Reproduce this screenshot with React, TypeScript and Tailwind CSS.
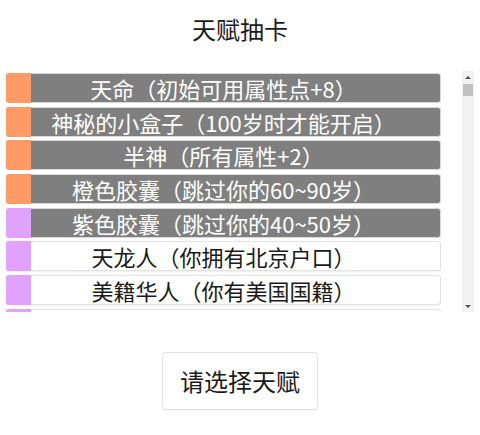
import React from 'react';

type Talent = {name: string; tier: 'orange' | 'purple'; dim: boolean};

const talents: Talent[] = [
  {name: '天命（初始可用属性点+8）', tier: 'orange', dim: true},
  {name: '神秘的小盒子（100岁时才能开启）', tier: 'orange', dim: true},
  {name: '半神（所有属性+2）', tier: 'orange', dim: true},
  {name: '橙色胶囊（跳过你的60~90岁）', tier: 'orange', dim: true},
  {name: '紫色胶囊（跳过你的40~50岁）', tier: 'purple', dim: true},
  {name: '天龙人（你拥有北京户口）', tier: 'purple', dim: false},
  {name: '美籍华人（你有美国国籍）', tier: 'purple', dim: false},
  {name: '人类进化（所有属性+1）', tier: 'purple', dim: false},
];

function TalentItem({talent}: {talent: Talent}) {
  return (
    <div
      className={
        'relative h-[30px] shrink-0 rounded-[3px] border text-center text-[22px] leading-[28px] ' +
        (talent.dim
          ? 'border-[#d9d9d9] bg-[#7f7f7f] text-white'
          : 'border-[#e2e2e2] bg-white text-[#1a1a1a] shadow-[0_1px_1px_rgba(0,0,0,0.06)]')
      }
    >
      <span
        className={
          'absolute -left-px -top-px -bottom-px w-[25px] rounded-l-[3px] ' +
          (talent.tier === 'orange' ? 'bg-[#ff9966]' : 'bg-[#e0a2fd]')
        }
      />
      {talent.name}
    </div>
  );
}

export default function App() {
  return (
    <div
      className="flex h-[435px] w-[480px] flex-col items-center bg-white text-[#1a1a1a]"
      style={{fontFamily: '"Noto Sans CJK SC", "Noto Sans", sans-serif'}}
    >
      <div className="flex h-[58px] items-center text-[24px] leading-none">天赋抽卡</div>

      <div className="mt-[13px] flex h-[241px] w-full px-[6px]">
        <div className="flex w-[436px] flex-col gap-[3.7px] overflow-y-auto pt-[2px] [scrollbar-width:none]">
          {talents.map(t => (
            <TalentItem key={t.name} talent={t} />
          ))}
        </div>

        <div className="ml-[21px] flex w-[12px] flex-col items-center bg-[#f1f1f1]">
          <div className="flex h-[12px] w-full items-center justify-center">
            <span className="h-0 w-0 border-x-[3px] border-b-[3px] border-x-transparent border-b-[#505050]" />
          </div>
          <div className="mt-[1px] h-[12px] w-[10px] bg-[#c1c1c1]" />
          <div className="flex-1" />
          <div className="flex h-[12px] w-full items-center justify-center">
            <span className="h-0 w-0 border-x-[3px] border-t-[3px] border-x-transparent border-t-[#505050]" />
          </div>
        </div>
      </div>

      <button className="mt-[40px] h-[58px] rounded-[4px] border border-[#e3e3e3] bg-white px-[17px] text-[24px] leading-none text-[#1a1a1a] shadow-[0_1px_2px_rgba(0,0,0,0.05)]">
        请选择天赋
      </button>
    </div>
  );
}
